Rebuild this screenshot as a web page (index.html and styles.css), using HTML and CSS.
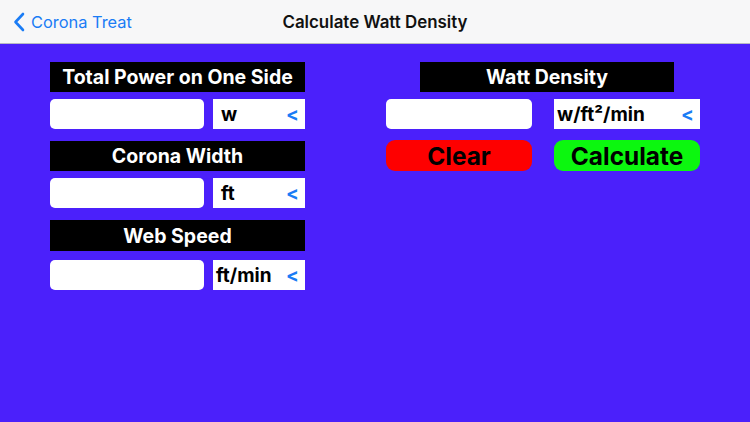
FILE: index.html
```html
<!DOCTYPE html>
<html lang="en">
<head>
<meta charset="utf-8">
<title>Calculate Watt Density</title>
<link rel="stylesheet" href="styles.css">
</head>
<body>
<header class="navbar">
  <a class="back">
    <svg class="chev" width="12" height="20" viewBox="0 0 12 20"><path d="M10 2 L2.5 10 L10 18" fill="none" stroke="#1a7cf5" stroke-width="2.6" stroke-linecap="round" stroke-linejoin="round"/></svg>
    <span>Corona Treat</span>
  </a>
  <h1 class="title">Calculate Watt Density</h1>
</header>
<main class="content">
  <section class="col-left">
    <div class="label">Total Power on One Side</div>
    <div class="row">
      <div class="field"></div>
      <div class="unit"><span>w</span><span class="arrow">&lt;</span></div>
    </div>
    <div class="label">Corona Width</div>
    <div class="row">
      <div class="field"></div>
      <div class="unit"><span>ft</span><span class="arrow">&lt;</span></div>
    </div>
    <div class="label label-tall">Web Speed</div>
    <div class="row">
      <div class="field"></div>
      <div class="unit unit-tight"><span>ft/min</span><span class="arrow">&lt;</span></div>
    </div>
  </section>
  <section class="col-right">
    <div class="label label-right">Watt Density</div>
    <div class="row row-right">
      <div class="field"></div>
      <div class="unit unit-tight"><span>w/ft²/min</span><span class="arrow">&lt;</span></div>
    </div>
    <div class="row row-right">
      <button class="btn btn-clear">Clear</button>
      <button class="btn btn-calc">Calculate</button>
    </div>
  </section>
</main>
</body>
</html>
```
FILE: styles.css
```css
html, body {
  margin: 0;
  padding: 0;
}
body {
  width: 750px;
  height: 422px;
  background: #4b20fb;
  font-family: Inter, "Liberation Sans", sans-serif;
  overflow: hidden;
}
.navbar {
  height: 44px;
  background: #f7f7f8;
  border-bottom: 1px solid #b8b8c4;
  box-sizing: border-box;
  display: flex;
  align-items: center;
  justify-content: center;
  position: relative;
}
.back {
  position: absolute;
  left: 13px;
  top: 0;
  height: 44px;
  display: flex;
  align-items: center;
  gap: 6px;
  color: #1a7cf5;
  font-size: 16.4px;
}
.chev {
  display: block;
}
.title {
  margin: 0;
  font-size: 16.9px;
  font-weight: 600;
  color: #111;
}
.content {
  display: flex;
  padding-top: 18px;
}
.col-left {
  margin-left: 50px;
  width: 255px;
  display: flex;
  flex-direction: column;
}
.col-right {
  margin-left: 81px;
  width: 314px;
  display: flex;
  flex-direction: column;
}
.label {
  height: 30px;
  background: #000;
  color: #fff;
  font-weight: 700;
  font-size: 19.5px;
  display: flex;
  align-items: center;
  justify-content: center;
  margin-bottom: 7px;
}
.label-tall {
  height: 31px;
  margin-bottom: 9px;
}
.label-right {
  width: 254px;
  margin-left: 34px;
}
.row {
  display: flex;
  height: 30px;
  gap: 9px;
  margin-bottom: 12px;
}
.row-right {
  gap: 22px;
  margin-bottom: 11px;
}
.field {
  flex: 1;
  background: #fff;
  border-radius: 5px;
}
.unit {
  width: 92px;
  background: #fff;
  display: flex;
  align-items: center;
  justify-content: space-between;
  padding: 0 6px 0 8px;
  box-sizing: border-box;
  font-weight: 700;
  font-size: 19px;
  color: #000;
}
.unit-tight {
  padding-left: 3px;
}
.row-right .field,
.row-right .unit,
.row-right .btn {
  width: 146px;
  flex: none;
}
.arrow {
  color: #1a7cf5;
  font-size: 19px;
}
.btn {
  height: 31px;
  border: none;
  border-radius: 9px;
  font-family: Inter, "Liberation Sans", sans-serif;
  font-weight: 700;
  font-size: 24.4px;
  color: #000;
  padding: 0;
}
.btn-clear {
  background: #fe0000;
}
.btn-calc {
  background: #0cf70f;
}
```
